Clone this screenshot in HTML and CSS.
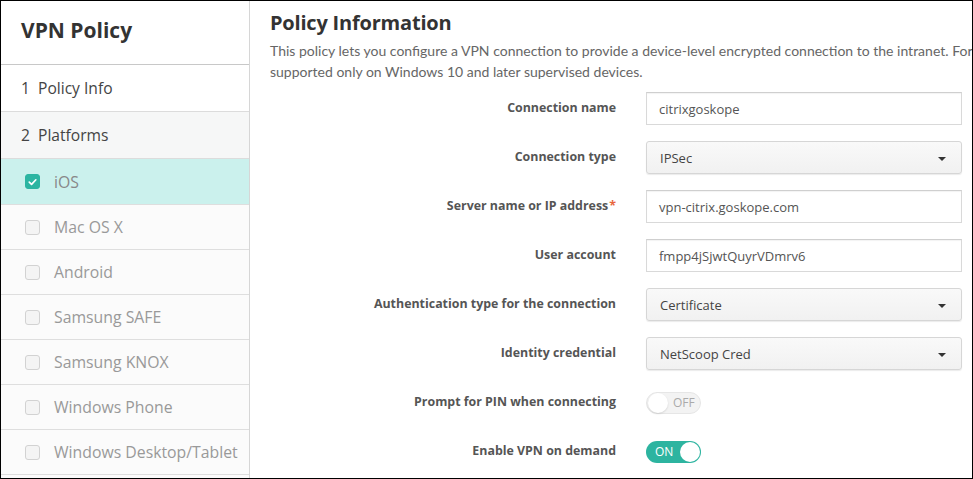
FILE: index.html
```
<!DOCTYPE html>
<html>
<head>
<meta charset="utf-8">
<link rel="stylesheet" href="styles.css">
</head>
<body>
<div class="frame">
  <aside class="sidebar">
    <div class="side-title">VPN Policy</div>
    <div class="step">1&nbsp;&nbsp;Policy Info</div>
    <div class="step step-alt">2&nbsp;&nbsp;Platforms</div>
    <div class="plat active"><span class="cb checked"><svg viewBox="0 0 14 14" width="14" height="14"><path d="M3.5 7.2 L6 9.6 L10.6 4.6" fill="none" stroke="#fff" stroke-width="1.8" stroke-linecap="round" stroke-linejoin="round"/></svg></span>iOS</div>
    <div class="plat"><span class="cb"></span>Mac OS X</div>
    <div class="plat"><span class="cb"></span>Android</div>
    <div class="plat"><span class="cb"></span>Samsung SAFE</div>
    <div class="plat"><span class="cb"></span>Samsung KNOX</div>
    <div class="plat"><span class="cb"></span>Windows Phone</div>
    <div class="plat"><span class="cb"></span>Windows Desktop/Tablet</div>
  </aside>
  <main class="main">
    <h1 class="title">Policy Information</h1>
    <p class="desc">This policy lets you configure a VPN connection to provide a device-level encrypted connection to the intranet. For<br>supported only on Windows 10 and later supervised devices.</p>
    <div class="form">
      <div class="label">Connection name</div>
      <div class="ctl"><div class="input">citrixgoskope</div></div>

      <div class="label">Connection type</div>
      <div class="ctl"><div class="select">IPSec<span class="caret"></span></div></div>

      <div class="label">Server name or IP address<span class="req">*</span></div>
      <div class="ctl"><div class="input">vpn-citrix.goskope.com</div></div>

      <div class="label">User account</div>
      <div class="ctl"><div class="input">fmpp4jSjwtQuyrVDmrv6</div></div>

      <div class="label">Authentication type for the connection</div>
      <div class="ctl"><div class="select">Certificate<span class="caret"></span></div></div>

      <div class="label">Identity credential</div>
      <div class="ctl"><div class="select">NetScoop Cred<span class="caret"></span></div></div>

      <div class="label">Prompt for PIN when connecting</div>
      <div class="ctl"><div class="toggle off"><span class="knob"></span><span class="tt">OFF</span></div></div>

      <div class="label">Enable VPN on demand</div>
      <div class="ctl"><div class="toggle on"><span class="tt">ON</span><span class="knob"></span></div></div>
    </div>
  </main>
</div>
</body>
</html>
```
FILE: styles.css
```
* { box-sizing: border-box; }
html, body { margin: 0; padding: 0; }
body {
  font-family: "Open Sans", "DejaVu Sans", sans-serif;
  background: #fff;
}
.frame {
  width: 973px;
  height: 479px;
  border: 1px solid #000;
  display: flex;
  overflow: hidden;
}
.sidebar {
  width: 249px;
  flex: none;
  border-right: 1px solid #d6d6d6;
  background: #fbfbfb;
  display: flex;
  flex-direction: column;
}
.side-title {
  height: 64px;
  border-bottom: 1px solid #c8c8c8;
  background: #fff;
  padding-left: 20px;
  display: flex;
  align-items: center;
  font-size: 21px;
  font-weight: 700;
  color: #333;
  padding-bottom: 6px;
}
.step {
  height: 47px;
  border-bottom: 1px solid #dcdcdc;
  background: #fff;
  padding-left: 20px;
  display: flex;
  align-items: center;
  font-size: 15.6px;
  color: #444;
}
.step-alt { background: #f6f7f7; }
.plat {
  height: 45px;
  border-bottom: 1px solid #dedede;
  padding-left: 24px;
  display: flex;
  align-items: center;
  font-size: 15.8px;
  color: #999;
  background: #fbfbfb;
}
.plat.active { background: #cbf1ed; color: #888; height: 46px; }
.cb {
  width: 15px;
  height: 15px;
  border: 1px solid #d2d2d2;
  border-radius: 3px;
  background: #f4f4f4;
  margin-right: 14px;
  display: inline-flex;
  align-items: center;
  justify-content: center;
}
.cb.checked { background: #2cb5a2; border-color: #2cb5a2; }
.main {
  flex: 1;
  min-width: 0;
  padding: 8px 0 0 20px;
  overflow: hidden;
}
.title {
  margin: 0;
  font-size: 20px;
  line-height: 28px;
  font-weight: 700;
  color: #333;
  letter-spacing: -0.2px;
}
.desc {
  margin: 3px 0 10px 0;
  font-family: "Lato", "Open Sans", sans-serif;
  font-size: 14px;
  line-height: 21px;
  color: #666;
  white-space: nowrap;
}
.form {
  display: grid;
  grid-template-columns: 346px 316px;
  column-gap: 30px;
  row-gap: 16px;
  grid-auto-rows: 33px;
}
.label {
  text-align: right;
  display: flex;
  align-items: center;
  justify-content: flex-end;
  font-size: 12.4px;
  font-weight: 700;
  color: #555;
  padding-bottom: 3px;
}
.req { color: #e8663d; margin-left: 1px; }
.ctl { display: flex; align-items: center; }
.input {
  width: 100%;
  height: 33px;
  border: 1px solid #d9d9d9;
  border-top-color: #cfcfcf;
  box-shadow: inset 0 1px 1px rgba(0,0,0,0.05);
  background: #fff;
  padding-left: 12px;
  display: flex;
  align-items: center;
  font-size: 13px;
  color: #555;
}
.select {
  width: 100%;
  height: 33px;
  border: 1px solid #d6d6d6;
  border-radius: 3px;
  background: linear-gradient(#f9f9f9, #f1f1f1);
  box-shadow: 0 1px 1px rgba(0,0,0,0.08);
  padding-left: 13px;
  display: flex;
  align-items: center;
  font-size: 13px;
  color: #444;
  position: relative;
}
.caret {
  position: absolute;
  right: 15px;
  top: 15px;
  width: 0;
  height: 0;
  border-left: 4px solid transparent;
  border-right: 4px solid transparent;
  border-top: 4px solid #333;
}
.toggle {
  width: 55px;
  height: 22px;
  border-radius: 11px;
  display: flex;
  align-items: center;
  font-size: 12px;
  padding: 0 1px;
}
.toggle.off {
  background: #f3f3f3;
  border: 1px solid #e6e6e6;
  color: #aaa;
}
.toggle.on {
  background: #2db4a0;
  color: #fff;
  justify-content: space-between;
  padding-left: 9px;
}
.knob {
  width: 20px;
  height: 20px;
  border-radius: 50%;
  background: #fff;
  box-shadow: 0 1px 2px rgba(0,0,0,0.12);
  flex: none;
}
.toggle.off .tt { margin-left: 5px; }
.toggle.on .knob { box-shadow: none; }
```
